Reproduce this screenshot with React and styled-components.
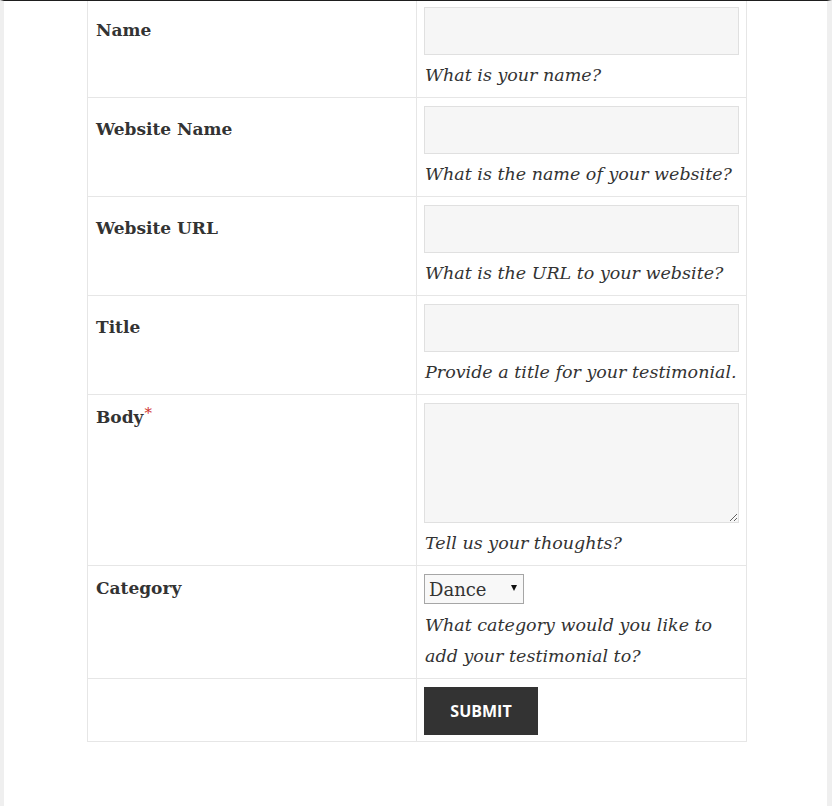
import React from "react";
import styled, { createGlobalStyle } from "styled-components";

const GlobalStyle = createGlobalStyle`
  html, body {
    margin: 0;
    padding: 0;
    background: #fff;
  }
  body {
    font-family: "DejaVu Serif", "Liberation Serif", serif;
    color: #333;
  }
`;

// Page frame: dark top rule, grey side strips
const Frame = styled.div`
  box-sizing: border-box;
  width: 832px;
  height: 806px;
  border-top: 1px solid #1e1e1e;
  border-left: 4px solid #efefef;
  border-right: 5px solid #efefef;
  overflow: hidden;
  background: #fff;
`;

const FormTable = styled.table`
  border-collapse: collapse;
  margin: -3px 0 0 83px;
  width: 660px;
  table-layout: fixed;
`;

const Row = styled.tr`
  border: 1px solid #e6e6e6;
`;

const Label = styled.th`
  width: 329px;
  box-sizing: border-box;
  padding: ${(p) => (p.$short ? "12px" : "21px")} 8px 8px;
  text-align: left;
  vertical-align: top;
  font-size: 17px;
  font-weight: bold;
  line-height: 20px;
  border: 1px solid #e6e6e6;
`;

const Field = styled.td`
  padding: 8px 7px 6px 7px;
  vertical-align: top;
  border: 1px solid #e6e6e6;
`;

const Required = styled.span`
  color: #d0312d;
  font-weight: normal;
  font-size: 15px;
  position: relative;
  top: -5px;
  margin-left: 1px;
`;

const TextInput = styled.input`
  display: block;
  box-sizing: border-box;
  width: 100%;
  height: 48px;
  margin: 0 0 5px;
  padding: 8px 10px;
  background: #f6f6f6;
  border: 1px solid #e0e0e0;
  font: 17px "DejaVu Serif", serif;
  color: #333;
  outline: none;
`;

const TextArea = styled.textarea`
  display: block;
  box-sizing: border-box;
  width: 100%;
  height: 120px;
  margin: 0 0 5px;
  padding: 4px 10px;
  background: #f6f6f6;
  border: 1px solid #e0e0e0;
  font: 17px "DejaVu Serif", serif;
  color: #333;
  outline: none;
`;

const SelectWrap = styled.div`
  position: relative;
  width: 100px;
  margin-bottom: 6px;

  &::after {
    content: "";
    position: absolute;
    right: 7px;
    top: 11px;
    border-left: 3px solid transparent;
    border-right: 3px solid transparent;
    border-top: 6px solid #111;
    pointer-events: none;
  }
`;

const Select = styled.select`
  appearance: none;
  display: block;
  box-sizing: border-box;
  width: 100px;
  height: 30px;
  padding: 0 4px;
  background: #f8f8f8;
  border: 1px solid #a6a6a6;
  border-radius: 0;
  font: 18px "DejaVu Serif", serif;
  color: #333;
  outline: none;
`;

const Hint = styled.div`
  padding-left: 1px;
  font-size: 17.5px;
  font-style: italic;
  line-height: 31px;
`;

const Submit = styled.button`
  display: block;
  width: 114px;
  height: 48px;
  border: 0;
  background: #333;
  color: #fff;
  font-family: "Open Sans", sans-serif;
  font-weight: 700;
  font-size: 16px;
  text-transform: uppercase;
  cursor: pointer;
`;

const textFields = [
  { label: "Name", hint: "What is your name?" },
  { label: "Website Name", hint: "What is the name of your website?" },
  { label: "Website URL", hint: "What is the URL to your website?" },
  { label: "Title", hint: "Provide a title for your testimonial." },
];

export default function App() {
  return (
    <>
      <GlobalStyle />
      <Frame>
        <FormTable>
          <tbody>
            {textFields.map((f) => (
              <Row key={f.label}>
                <Label>{f.label}</Label>
                <Field>
                  <TextInput type="text" />
                  <Hint>{f.hint}</Hint>
                </Field>
              </Row>
            ))}
            <Row>
              <Label $short>
                Body<Required>*</Required>
              </Label>
              <Field>
                <TextArea />
                <Hint>Tell us your thoughts?</Hint>
              </Field>
            </Row>
            <Row>
              <Label $short>Category</Label>
              <Field>
                <SelectWrap>
                  <Select defaultValue="Dance">
                    <option>Dance</option>
                    <option>Music</option>
                    <option>Theatre</option>
                  </Select>
                </SelectWrap>
                <Hint>
                  What category would you like to
                  <br />
                  add your testimonial to?
                </Hint>
              </Field>
            </Row>
            <Row>
              <Label />
              <Field>
                <Submit type="submit">Submit</Submit>
              </Field>
            </Row>
          </tbody>
        </FormTable>
      </Frame>
    </>
  );
}
